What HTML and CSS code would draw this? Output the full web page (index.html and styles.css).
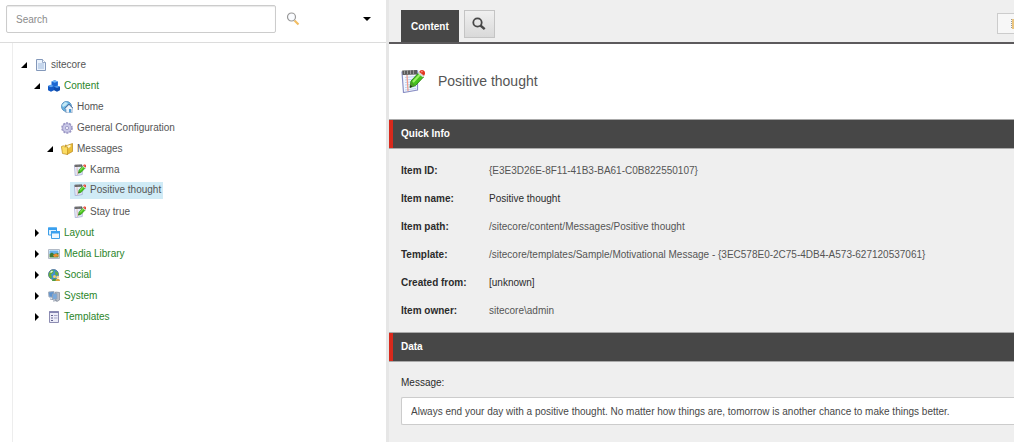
FILE: index.html
```html
<!DOCTYPE html>
<html lang="en">
<head>
    <meta charset="UTF-8">
    <title>Content Editor</title>
    <meta name="viewport" content="width=device-width, initial-scale=1.0">
    <link rel="stylesheet" href="styles.css">
</head>

<body>

<!-- shared icons -->
<svg class="sprite" aria-hidden="true">
    <symbol id="note" viewBox="0 0 24 24">
        <path d="M1 3L16.500 2V21L2.500 23.500Z" fill="#f4f8ff" stroke="#8b90c4" stroke-width="1.200"/>
        <path d="M4 8.500l11-1M4 11l11-1M4 13.500l11-1M4 16l11-1M4 18.500l11-1M4 21l11-1.500" stroke="#b4cdf0" stroke-width=".9"/>
        <path d="M6 6L7 22" stroke="#ef9d8e" stroke-width="1.200"/>
        <path d="M1.200 1.500L16 1v4.500L1.500 6z" fill="#5c5c5c"/>
        <path d="M3.500 1v4M6.500 1v4M9.500 1v4M12.500 1v4" stroke="#a8a8a8" stroke-width=".8"/>
        <path d="M9 18.500l1-6.500 7.500-8 5 4-8 8.500z" fill="#46c31d" stroke="#27850f" stroke-width=".9"/>
        <path d="M12 13l7-7.500" stroke="#9df066" stroke-width="2"/>
        <path d="M9 18.500l.9-6 4.200 3.800z" fill="#4c9f28"/>
        <path d="M9 18.500l.4-2.500 1.800 1.400z" fill="#222"/>
        <path d="M17 4.500l1.800-2 4.700 3.800-1.800 2z" fill="#d8dad8"/>
        <path d="M18.300 3c1-3 6-2.500 5.700 1.500-.1 1-.5 1.700-1 2.300z" fill="#e23320"/>
        <circle cx="20.800" cy="2.500" r="1" fill="#f58a78"/>
    </symbol>
</svg>

<div class="page">

    <aside class="sidebar">
        <form class="search" action="#" method="get">
            <input type="text" class="search-field" name="search" placeholder="Search" aria-label="Search">
            <button type="button" class="plain" aria-label="Find">
                <svg width="14" height="14" viewBox="0 0 14 14">
                    <path d="M8.500 8.500l4 4" stroke="#f2bd62" stroke-width="2.200"/>
                    <circle cx="5.500" cy="5" r="4" fill="#fafcff" stroke="#999" stroke-width="1.200"/>
                </svg>
            </button>
            <button type="button" class="plain more" aria-label="Search options">
                <svg width="8" height="4" viewBox="0 0 8 4"><path d="M0 0h8L4 4z"/></svg>
            </button>
        </form>

        <ul class="tree">
            <li>
                <a class="node" href="#">
                    <svg class="arrow" viewBox="0 0 6 8"><path d="M6 1v6H0z"/></svg>
                    <svg class="icon" viewBox="0 0 12 12">
                        <path d="M1.500.5h6l3 3v8h-9z" fill="#eaf2fc" stroke="#8398ba"/>
                        <path d="M7.500.5v3h3" fill="#fff" stroke="#8398ba" stroke-width=".8"/>
                        <path d="M3 5h6M3 7h6M3 9h6" stroke="#9fb9dc"/>
                    </svg>
                    <span class="label">sitecore</span>
                </a>
                <ul>
                    <li>
                        <a class="node main" href="#">
                            <svg class="arrow" viewBox="0 0 6 8"><path d="M6 1v6H0z"/></svg>
                            <svg class="icon" viewBox="0 0 12 12">
                                <path d="M3.500 1.500L6.700.2l3.200 1.300v4L6.700 7 3.500 5.500z" fill="#1a66d2"/>
                                <path d="M3.500 1.500L6.700.2l3.200 1.300-3.200 1.300z" fill="#6fb4f7"/>
                                <path d="M0 6l3-1.200L6 6v4.200l-3 1.500-3-1.500z" fill="#1258c4"/>
                                <path d="M0 6l3-1.200L6 6 3 7.300z" fill="#5da5f2"/>
                                <path d="M6 6.800l3-1.300 3 1.300v3.400l-3 1.500-3-1.500z" fill="#0d4cae"/>
                                <path d="M6 6.800l3-1.300 3 1.300L9 8z" fill="#4c98ed"/>
                            </svg>
                            <span class="label">Content</span>
                        </a>
                        <ul>
                            <li>
                                <a class="node" href="#">
                                    <span class="arrow"></span>
                                    <svg class="icon" viewBox="0 0 12 12">
                                        <circle cx="5.500" cy="5.500" r="5" fill="#69b3e2" stroke="#4684b8" stroke-width=".8"/>
                                        <path d="M1 4l3-3 3 1-2 2.500L2 6z" fill="#c4e8f5"/>
                                        <path d="M4 7.500L8 3.500l4 4-1 .7V12H5V8.300z" fill="#eef4fb" stroke="#7191b4" stroke-width=".7"/>
                                        <path d="M3.500 7.500L8 3l4 4.200" fill="none" stroke="#5479a5"/>
                                        <path d="M8 8h2v3.500H8z" fill="#4d9bd5"/>
                                    </svg>
                                    <span class="label">Home</span>
                                </a>
                            </li>
                            <li>
                                <a class="node" href="#">
                                    <span class="arrow"></span>
                                    <svg class="icon" viewBox="0 0 12 12">
                                        <circle cx="6" cy="6" r="4.900" fill="none" stroke="#9a96c4" stroke-width="1.800" stroke-dasharray="2 1.080"/>
                                        <circle cx="6" cy="6" r="4.400" fill="#cac9e8" stroke="#9c98c6" stroke-width=".8"/>
                                        <circle cx="6" cy="6" r="1.700" fill="#e9e9f7" stroke="#8d89ba" stroke-width=".7"/>
                                    </svg>
                                    <span class="label">General Configuration</span>
                                </a>
                            </li>
                            <li>
                                <a class="node" href="#">
                                    <svg class="arrow" viewBox="0 0 6 8"><path d="M6 1v6H0z"/></svg>
                                    <svg class="icon" viewBox="0 0 12 12">
                                        <path d="M4 2l2 .5L11.500.5v8l-5.500 3z" fill="#edc03a" stroke="#b78615" stroke-width=".7"/>
                                        <path d="M5.500 3L9.500 1.700v2L6 6z" fill="#fff8d5"/>
                                        <path d="M.4 3.500l2-.7 1 .9 3.300.3L6.500 11.500l-5-1z" fill="#fbdc63" stroke="#bd8d1d" stroke-width=".7"/>
                                    </svg>
                                    <span class="label">Messages</span>
                                </a>
                                <ul>
                                    <li>
                                        <a class="node" href="#">
                                            <span class="arrow"></span>
                                            <svg class="icon"><use href="#note"/></svg>
                                            <span class="label">Karma</span>
                                        </a>
                                    </li>
                                    <li>
                                        <a class="node active" href="#">
                                            <span class="arrow"></span>
                                            <svg class="icon"><use href="#note"/></svg>
                                            <span class="label">Positive thought</span>
                                        </a>
                                    </li>
                                    <li>
                                        <a class="node" href="#">
                                            <span class="arrow"></span>
                                            <svg class="icon"><use href="#note"/></svg>
                                            <span class="label">Stay true</span>
                                        </a>
                                    </li>
                                </ul>
                            </li>
                        </ul>
                    </li>
                    <li>
                        <a class="node main" href="#">
                            <svg class="arrow" viewBox="0 0 6 8"><path d="M1 0l4 4-4 4z"/></svg>
                            <svg class="icon" viewBox="0 0 12 12">
                                <path d="M.5 1h8v7h-8z" fill="#dff1ff" stroke="#3e9fe8"/>
                                <path d="M0 .5h9v2.500H0z" fill="#3aa0ef"/>
                                <path d="M3.500 4.500h8v7h-8z" fill="#edf7ff" stroke="#3e9fe8"/>
                                <path d="M3 4h9v2.500H3z" fill="#3aa0ef"/>
                            </svg>
                            <span class="label">Layout</span>
                        </a>
                    </li>
                    <li>
                        <a class="node main" href="#">
                            <svg class="arrow" viewBox="0 0 6 8"><path d="M1 0l4 4-4 4z"/></svg>
                            <svg class="icon" viewBox="0 0 12 12">
                                <path d="M.5 1.500h11v9H.5z" fill="#fff" stroke="#b2bac6"/>
                                <path d="M1.500 2.500h9v3.500h-9z" fill="#65b1ea"/>
                                <path d="M1.500 6l2.500-1.500L6 6l4.500-1v4.500h-9z" fill="#3e7a35"/>
                                <path d="M5 7l3-1.500L10.500 7v1.500L6 9z" fill="#ee8d30"/>
                            </svg>
                            <span class="label">Media Library</span>
                        </a>
                    </li>
                    <li>
                        <a class="node main" href="#">
                            <svg class="arrow" viewBox="0 0 6 8"><path d="M1 0l4 4-4 4z"/></svg>
                            <svg class="icon" viewBox="0 0 12 12">
                                <circle cx="5.500" cy="5.500" r="5" fill="#3f91d4" stroke="#47698c" stroke-width=".8"/>
                                <path d="M1 4l2.500-3L6 1.500 5 4 3 5.500 4 8l-1 2-2.300-3zM7 2l3 1.500v3L7.500 6z" fill="#67ae3b"/>
                                <path d="M2 3l2-1.500 1 1L3 4z" fill="#e2f4ee"/>
                                <circle cx="6.500" cy="7.500" r="1.500" fill="#f1cf72"/>
                                <path d="M4 12c0-3.500 5-3.500 5 0z" fill="#4b9c45"/>
                                <circle cx="9.700" cy="8.200" r="1.400" fill="#f4d994"/>
                                <path d="M7.500 12c0-3 4.500-3 4.500 0z" fill="#dba33b"/>
                            </svg>
                            <span class="label">Social</span>
                        </a>
                    </li>
                    <li>
                        <a class="node main" href="#">
                            <svg class="arrow" viewBox="0 0 6 8"><path d="M1 0l4 4-4 4z"/></svg>
                            <svg class="icon" viewBox="0 0 12 12">
                                <path d="M7.500 2l4 .5v7.500l-2.500 1.500-1.500-1z" fill="#b9bec8" stroke="#838b9a" stroke-width=".7"/>
                                <path d="M.5 2l5.500-.5.5 6L1 7z" fill="#5e93cf" stroke="#a6b0bd"/>
                                <path d="M4.500 4l4.500-.5V9l-4.500.5z" fill="#79aadd" stroke="#97a3b5" stroke-width=".8"/>
                                <path d="M2 9l3 .5M5 11l4-.5" stroke="#929cac"/>
                            </svg>
                            <span class="label">System</span>
                        </a>
                    </li>
                    <li>
                        <a class="node main" href="#">
                            <svg class="arrow" viewBox="0 0 6 8"><path d="M1 0l4 4-4 4z"/></svg>
                            <svg class="icon" viewBox="0 0 12 12">
                                <path d="M1.500.5h9v11h-9z" fill="#ececf8" stroke="#8d8db2"/>
                                <path d="M1 .5h10v1.500H1z" fill="#8585b2"/>
                                <path d="M3 4.500h2M3 7h2M3 9.500h2" stroke="#62628f"/>
                                <path d="M6 4.500h3.500M6 7h3.500" stroke="#a9a9ca"/>
                            </svg>
                            <span class="label">Templates</span>
                        </a>
                    </li>
                </ul>
            </li>
        </ul>
    </aside>

    <main class="editor">
        <div class="tabs">
            <button type="button" class="tab">Content</button>
            <button type="button" class="tab-search" aria-label="Search tab">
                <svg width="14" height="14" viewBox="0 0 14 14">
                    <circle cx="5.500" cy="5.500" r="4.200" fill="none" stroke="#474747" stroke-width="1.800"/>
                    <path d="M8.500 8.500l4.200 3.700" stroke="#474747" stroke-width="2.400"/>
                </svg>
            </button>
            <button type="button" class="tool" aria-label="Tools">
                <svg width="3" height="10" viewBox="0 0 3 10">
                    <path d="M1 0h2v10H1z" fill="#eac47e"/>
                    <path d="M.5 0v10" stroke="#999" stroke-dasharray="1 1"/>
                </svg>
            </button>
        </div>

        <header class="title">
            <svg class="title-icon"><use href="#note"/></svg>
            <h1>Positive thought</h1>
        </header>

        <h2 class="section">Quick Info</h2>
        <table class="info">
            <tr><th scope="row">Item ID:</th><td>{E3E3D26E-8F11-41B3-BA61-C0B822550107}</td></tr>
            <tr><th scope="row">Item name:</th><td class="dark">Positive thought</td></tr>
            <tr><th scope="row">Item path:</th><td>/sitecore/content/Messages/Positive thought</td></tr>
            <tr><th scope="row">Template:</th><td>/sitecore/templates/Sample/Motivational Message - {3EC578E0-2C75-4DB4-A573-627120537061}</td></tr>
            <tr><th scope="row">Created from:</th><td class="dark">[unknown]</td></tr>
            <tr><th scope="row">Item owner:</th><td>sitecore\admin</td></tr>
        </table>

        <h2 class="section">Data</h2>
        <form class="fields" action="#" method="get">
            <label for="message">Message:</label>
            <input type="text" id="message" name="message" value="Always end your day with a positive thought. No matter how things are, tomorrow is another chance to make things better.">
        </form>
    </main>

</div>
</body>
</html>
```

FILE: styles.css
```css
* {
box-sizing: border-box;
}

body {
margin: 0;
font-family: "Liberation Sans", Arial, Helvetica, sans-serif;
font-size: 10px;
line-height: 14px;
color: #555;
background: #fff;
}

input, button {
font-family: inherit;
font-size: 10px;
}

svg {
display: block;
flex: none;
}

.sprite {
position: absolute;
width: 0;
height: 0;
}

.page {
display: grid;
grid-template-columns: 386px minmax(0, 1fr);
min-height: 100vh;
}

/* left side */
.sidebar {
display: flex;
flex-direction: column;
}

.search {
display: flex;
align-items: center;
height: 43px;
padding: 0 15px 4px 6px;
border-bottom: 1px solid #dcdcdc;
}

.search-field {
width: 270px;
height: 28px;
padding: 0 9px;
border: 1px solid #ccc;
border-radius: 2px;
box-shadow: inset 0 1px 1px #e8e8e8;
}

.search-field::placeholder {
color: #8c8c8c;
}

.plain {
padding: 0;
border: 0;
background: none;
margin-left: 10px;
}

.more {
margin-left: auto;
}

.tree {
flex: 1;
margin: 0 0 0 12px;
padding: 11px 0 0 4px;
border-left: 1px solid #ededed;
}

.tree, .tree ul {
list-style: none;
}

.tree ul {
margin: 0;
padding: 0 0 0 13px;
}

.node {
display: flex;
align-items: center;
height: 21px;
color: #555;
text-decoration: none;
}

.main {
color: #2a852a;
}

.arrow {
width: 6px;
height: 8px;
margin: 0 4px;
}

.icon {
width: 12px;
height: 12px;
margin: 0 4px;
}

.label {
white-space: nowrap;
}

.active .icon {
width: 20px;
height: 17px;
margin: 0;
padding: 2px 4px 3px;
background: #d0ebf6;
}

.active .label {
height: 17px;
padding: 1px 2px 0 0;
background: #d0ebf6;
}

/* right side */
.editor {
border-left: 3px solid #e6e6e6;
background: #efefef;
}

.tabs {
display: flex;
align-items: flex-start;
height: 44px;
padding: 10px 0 0 12px;
border-bottom: 2px solid #5c5a5c;
}

.tab {
height: 32px;
padding: 0 10px;
border: 0;
background: #474747;
color: #fff;
font-weight: bold;
}

.tab-search {
display: flex;
align-items: center;
justify-content: center;
width: 31px;
height: 28px;
margin-left: 5px;
padding: 0;
border: 1px solid #c4c4c4;
background: linear-gradient(#f0f0f0, #d9d9d9);
}

.tool {
display: flex;
align-items: center;
justify-content: flex-end;
width: 17px;
height: 21px;
margin: 3px 0 0 auto;
padding: 0;
border: 1px solid #ccc;
border-right: 0;
background: #f7f7f7;
}

.title {
display: flex;
align-items: center;
gap: 13px;
height: 75px;
padding: 0 12px 2px;
background: #fff;
}

.title-icon {
width: 24px;
height: 24px;
}

.title h1 {
margin: 0;
font-size: 14px;
font-weight: normal;
line-height: 20px;
}

.section {
height: 30px;
margin: 0;
padding: 7px 12px;
border: 1px solid #aaa;
border-width: 1px 0;
box-shadow: inset 4px 0 #d9291c;
background: #474747;
color: #fff;
font-size: 10px;
line-height: 14px;
}

.info {
border-collapse: collapse;
margin: 8px 12px 7px;
}

.info th, .info td {
height: 28px;
padding: 0;
text-align: left;
white-space: nowrap;
}

.info th {
width: 88px;
color: #2b2b2b;
}

.info .dark {
color: #2b2b2b;
}

.fields {
display: flex;
flex-direction: column;
gap: 7px;
padding: 14px 0 0 12px;
}

.fields label {
color: #2b2b2b;
}

.fields input {
width: 100%;
height: 28px;
padding: 0 9px;
border: 1px solid #ccc;
border-right: 0;
border-radius: 2px 0 0 2px;
background: #fff;
color: #474747;
}
```
